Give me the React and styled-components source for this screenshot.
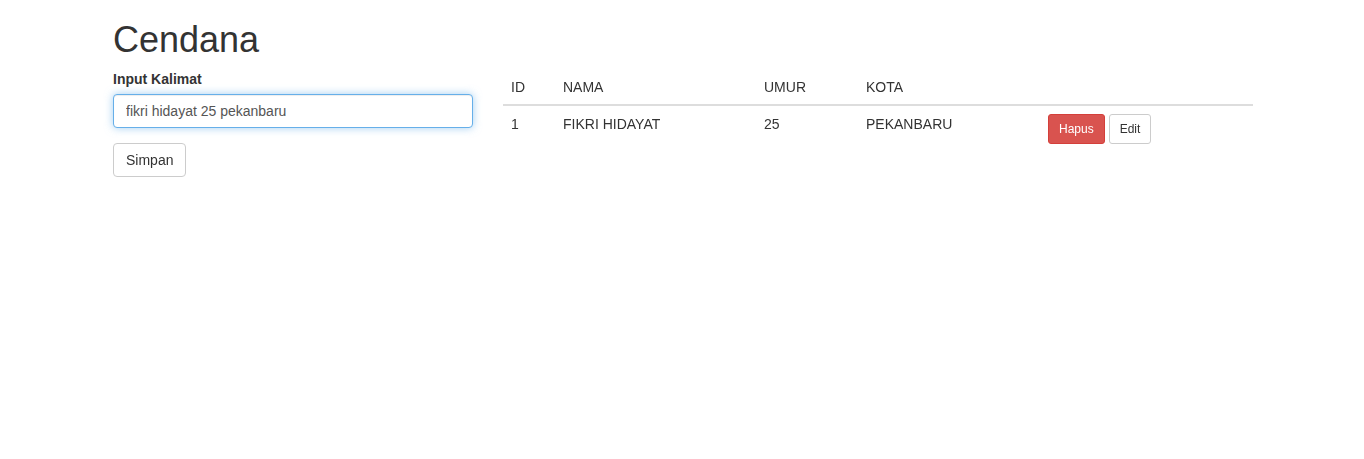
import React from "react";
import styled, { createGlobalStyle } from "styled-components";

const GlobalStyle = createGlobalStyle`
  html, body {
    margin: 0;
    padding: 0;
    background: #fff;
  }
  body {
    font-family: "Liberation Sans", Arial, sans-serif;
    font-size: 14px;
    line-height: 1.42857143;
    color: #333;
  }
  * {
    box-sizing: border-box;
  }
`;

const Container = styled.div`
  width: 1170px;
  margin: 0 auto;
  padding: 0 14px 0 16px;
`;

const Title = styled.h1`
  margin: 20px 0 9px;
  font-size: 36px;
  font-weight: 500;
  line-height: 1.1;
`;

const Row = styled.div`
  display: flex;
  margin: 0 -15px;
`;

const Col = styled.div`
  width: ${(p) => p.$size}px;
  padding: 0 15px;
`;

const FormGroup = styled.div`
  margin-bottom: 15px;
`;

const Label = styled.label`
  display: block;
  margin-bottom: 5px;
  font-weight: 700;
`;

const Input = styled.input`
  display: block;
  width: 100%;
  height: 34px;
  padding: 6px 12px;
  font-family: inherit;
  font-size: 14px;
  line-height: 1.42857143;
  color: #555;
  background: #fff;
  border: 1px solid #66afe9;
  border-radius: 4px;
  outline: 0;
  box-shadow: inset 0 1px 1px rgba(0, 0, 0, 0.075), 0 0 8px rgba(102, 175, 233, 0.6);
`;

const Button = styled.button`
  display: inline-block;
  font-family: inherit;
  font-size: ${(p) => (p.$small ? 12 : 14)}px;
  line-height: ${(p) => (p.$small ? 1.5 : 1.42857143)};
  padding: ${(p) => (p.$small ? "5px 10px" : "6px 12px")};
  border-radius: ${(p) => (p.$small ? 3 : 4)}px;
  border: 1px solid ${(p) => (p.$danger ? "#d43f3a" : "#ccc")};
  background: ${(p) => (p.$danger ? "#d9534f" : "#fff")};
  color: ${(p) => (p.$danger ? "#fff" : "#333")};
  cursor: pointer;
`;

const Actions = styled.div`
  display: flex;
  gap: 4px;
`;

const Table = styled.table`
  width: 100%;
  border-collapse: collapse;
  border-spacing: 0;
  margin-bottom: 20px;
`;

const Cell = styled.td`
  padding: 8px;
  text-align: left;
  vertical-align: top;
  line-height: 1.42857143;
  width: ${(p) => (p.$w ? `${p.$w}px` : "auto")};
`;

const HeadCell = styled(Cell)`
  padding-bottom: 7px;
  vertical-align: bottom;
  border-bottom: 2px solid #ddd;
`;

const rows = [{ id: 1, nama: "FIKRI HIDAYAT", umur: 25, kota: "PEKANBARU" }];

export default function App() {
  return (
    <>
      <GlobalStyle />
      <Container>
        <Title>Cendana</Title>
        <Row>
          <Col $size={390}>
            <FormGroup>
              <Label>Input Kalimat</Label>
              <Input defaultValue="fikri hidayat 25 pekanbaru" autoFocus />
            </FormGroup>
            <Button>Simpan</Button>
          </Col>
          <Col $size={780}>
            <Table>
              <thead>
                <tr>
                  <HeadCell $w={52}>ID</HeadCell>
                  <HeadCell $w={201}>NAMA</HeadCell>
                  <HeadCell $w={102}>UMUR</HeadCell>
                  <HeadCell $w={182}>KOTA</HeadCell>
                  <HeadCell></HeadCell>
                </tr>
              </thead>
              <tbody>
                {rows.map((r) => (
                  <tr key={r.id}>
                    <Cell>{r.id}</Cell>
                    <Cell>{r.nama}</Cell>
                    <Cell>{r.umur}</Cell>
                    <Cell>{r.kota}</Cell>
                    <Cell>
                      <Actions>
                        <Button $small $danger>Hapus</Button>
                        <Button $small>Edit</Button>
                      </Actions>
                    </Cell>
                  </tr>
                ))}
              </tbody>
            </Table>
          </Col>
        </Row>
      </Container>
    </>
  );
}
